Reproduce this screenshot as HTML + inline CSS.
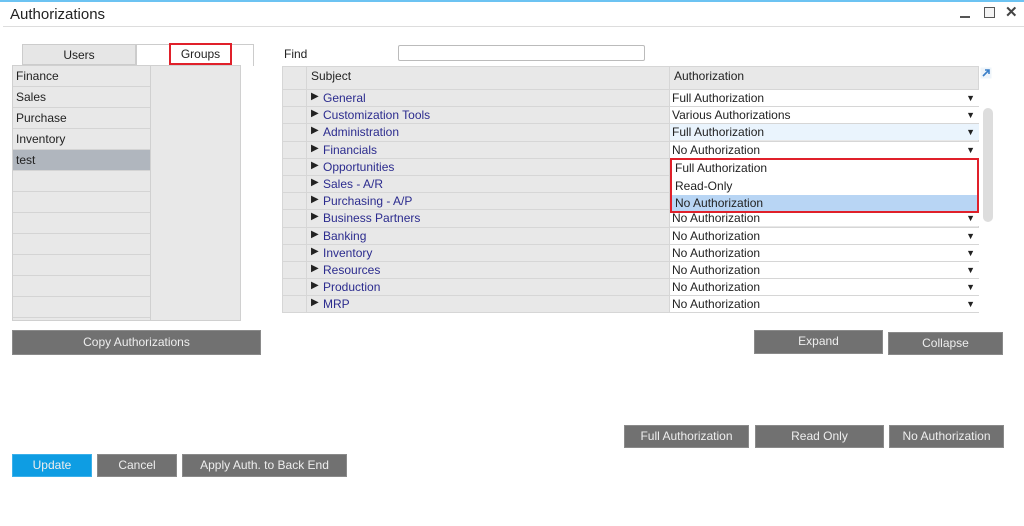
<!DOCTYPE html>
<html><head><style>
*{margin:0;padding:0;box-sizing:border-box}
body{width:1024px;height:526px;background:#fff;font-family:"Liberation Sans",sans-serif;font-size:12px;color:#222;position:relative;overflow:hidden}
.a{position:absolute}
.btn{position:absolute;background:#717171;color:#eee;text-align:center;font-size:12px;border:1px solid #8a8a8a}
.row{position:absolute;left:0;height:17px;border-bottom:1px solid #d6d6d6}
</style></head><body>
<div class="a" style="left:0;top:0;width:1024px;height:2px;background:#6cc3f2"></div>
<div class="a" style="left:10px;top:6px;font-size:15px;color:#222">Authorizations</div>
<div class="a" style="left:3px;top:26px;width:1021px;height:1px;background:#ddd"></div>
<div class="a" style="left:960px;top:16px;width:10px;height:2px;background:#555"></div>
<div class="a" style="left:984px;top:7px;width:11px;height:11px;border:1px solid #555;background:#f4f4f4"></div>
<div class="a" style="left:1005px;top:3px;font-size:15px;font-weight:bold;color:#444">✕</div>

<!-- tabs -->
<div class="a" style="left:22px;top:44px;width:114px;height:21px;background:#e6e6e6;border:1px solid #ccc;text-align:center;line-height:20px">Users</div>
<div class="a" style="left:136px;top:44px;width:118px;height:22px;background:#fff;border:1px solid #ccc;border-bottom:none"></div>
<div class="a" style="left:169px;top:43px;width:63px;height:22px;border:2px solid #e0202a;text-align:center;line-height:18px">Groups</div>

<!-- left list -->
<div class="a" style="left:12px;top:65px;width:229px;height:256px;background:#e8e8e8;border:1px solid #d0d0d0"></div>
<div class="a" style="left:150px;top:65px;width:1px;height:256px;background:#d0d0d0"></div>
<div class="a" style="left:13px;top:66px;width:137px">
<div style="height:21px;border-bottom:1px solid #d4d4d4;padding-left:3px;line-height:21px">Finance</div>
<div style="height:21px;border-bottom:1px solid #d4d4d4;padding-left:3px;line-height:21px">Sales</div>
<div style="height:21px;border-bottom:1px solid #d4d4d4;padding-left:3px;line-height:21px">Purchase</div>
<div style="height:21px;border-bottom:1px solid #d4d4d4;padding-left:3px;line-height:21px">Inventory</div>
<div style="height:21px;border-bottom:1px solid #d4d4d4;padding-left:3px;line-height:21px;background:#b0b6be">test</div>
<div style="height:21px;border-bottom:1px solid #d4d4d4"></div>
<div style="height:21px;border-bottom:1px solid #d4d4d4"></div>
<div style="height:21px;border-bottom:1px solid #d4d4d4"></div>
<div style="height:21px;border-bottom:1px solid #d4d4d4"></div>
<div style="height:21px;border-bottom:1px solid #d4d4d4"></div>
<div style="height:21px;border-bottom:1px solid #d4d4d4"></div>
<div style="height:21px;border-bottom:1px solid #d4d4d4"></div>
</div>
<div class="btn" style="left:12px;top:330px;width:249px;height:25px;line-height:22px">Copy Authorizations</div>

<!-- find -->
<div class="a" style="left:284px;top:47px">Find</div>
<div class="a" style="left:398px;top:45px;width:247px;height:16px;border:1px solid #bbb;border-radius:2px"></div>

<!-- grid -->
<div class="a" style="left:282px;top:66px;width:697px;height:247px;background:#e8e8e8;border:1px solid #d6d6d6"></div>
<div class="a" style="left:306px;top:66px;width:1px;height:247px;background:#d6d6d6"></div>
<div class="a" style="left:669px;top:66px;width:1px;height:247px;background:#d6d6d6"></div>
<div class="a" style="left:311px;top:69px">Subject</div>
<div class="a" style="left:674px;top:69px">Authorization</div>
<svg class="a" style="left:980px;top:67px" width="12" height="12"><rect x="0.5" y="0.5" width="11" height="11" fill="#eef4fa"/><path d="M3 9L9 3M5 3H9V7" stroke="#3a7fc8" stroke-width="1.6" fill="none"/></svg>
<div class="a" style="left:983px;top:108px;width:10px;height:114px;background:#ddd;border-radius:5px"></div>
<div class="a" style="left:283px;top:89px;width:696px" id="g"></div>
<div class="a" style="left:283px;top:89px;width:696px">
<div style="position:relative;height:223px">
</div></div>
<div class="a" style="left:0;top:0">
<!-- rows generated inline -->
</div>
<div class="a" style="left:283px;top:89px;width:696px">
<div style="height:17.2px;border-top:1px solid #d6d6d6;position:relative"><span class="a" style="left:28px;top:1px;font-size:10px">▶</span><span class="a" style="left:40px;top:1px;color:#2b2b8e">General</span><div class="a" style="left:387px;top:0;width:309px;height:16px;background:#fff;padding-left:2px;line-height:16px">Full Authorization<span class="a" style="right:4px;top:0;font-size:9px">▼</span></div></div>
<div style="height:17.2px;border-top:1px solid #d6d6d6;position:relative"><span class="a" style="left:28px;top:1px;font-size:10px">▶</span><span class="a" style="left:40px;top:1px;color:#2b2b8e">Customization Tools</span><div class="a" style="left:387px;top:0;width:309px;height:16px;background:#fff;padding-left:2px;line-height:16px">Various Authorizations<span class="a" style="right:4px;top:0;font-size:9px">▼</span></div></div>
<div style="height:17.2px;border-top:1px solid #d6d6d6;position:relative"><span class="a" style="left:28px;top:1px;font-size:10px">▶</span><span class="a" style="left:40px;top:1px;color:#2b2b8e">Administration</span><div class="a" style="left:387px;top:0;width:309px;height:16px;background:#eaf4fd;padding-left:2px;line-height:16px">Full Authorization<span class="a" style="right:4px;top:0;font-size:9px">▼</span></div></div>
<div style="height:17.2px;border-top:1px solid #d6d6d6;position:relative"><span class="a" style="left:28px;top:1px;font-size:10px">▶</span><span class="a" style="left:40px;top:1px;color:#2b2b8e">Financials</span><div class="a" style="left:387px;top:0;width:309px;height:16px;background:#fff;padding-left:2px;line-height:16px">No Authorization<span class="a" style="right:4px;top:0;font-size:9px">▼</span></div></div>
<div style="height:17.2px;border-top:1px solid #d6d6d6;position:relative"><span class="a" style="left:28px;top:1px;font-size:10px">▶</span><span class="a" style="left:40px;top:1px;color:#2b2b8e">Opportunities</span></div>
<div style="height:17.2px;border-top:1px solid #d6d6d6;position:relative"><span class="a" style="left:28px;top:1px;font-size:10px">▶</span><span class="a" style="left:40px;top:1px;color:#2b2b8e">Sales - A/R</span></div>
<div style="height:17.2px;border-top:1px solid #d6d6d6;position:relative"><span class="a" style="left:28px;top:1px;font-size:10px">▶</span><span class="a" style="left:40px;top:1px;color:#2b2b8e">Purchasing - A/P</span></div>
<div style="height:17.2px;border-top:1px solid #d6d6d6;position:relative"><span class="a" style="left:28px;top:1px;font-size:10px">▶</span><span class="a" style="left:40px;top:1px;color:#2b2b8e">Business Partners</span><div class="a" style="left:387px;top:0;width:309px;height:16px;background:#fff;padding-left:2px;line-height:16px">No Authorization<span class="a" style="right:4px;top:0;font-size:9px">▼</span></div></div>
<div style="height:17.2px;border-top:1px solid #d6d6d6;position:relative"><span class="a" style="left:28px;top:1px;font-size:10px">▶</span><span class="a" style="left:40px;top:1px;color:#2b2b8e">Banking</span><div class="a" style="left:387px;top:0;width:309px;height:16px;background:#fff;padding-left:2px;line-height:16px">No Authorization<span class="a" style="right:4px;top:0;font-size:9px">▼</span></div></div>
<div style="height:17.2px;border-top:1px solid #d6d6d6;position:relative"><span class="a" style="left:28px;top:1px;font-size:10px">▶</span><span class="a" style="left:40px;top:1px;color:#2b2b8e">Inventory</span><div class="a" style="left:387px;top:0;width:309px;height:16px;background:#fff;padding-left:2px;line-height:16px">No Authorization<span class="a" style="right:4px;top:0;font-size:9px">▼</span></div></div>
<div style="height:17.2px;border-top:1px solid #d6d6d6;position:relative"><span class="a" style="left:28px;top:1px;font-size:10px">▶</span><span class="a" style="left:40px;top:1px;color:#2b2b8e">Resources</span><div class="a" style="left:387px;top:0;width:309px;height:16px;background:#fff;padding-left:2px;line-height:16px">No Authorization<span class="a" style="right:4px;top:0;font-size:9px">▼</span></div></div>
<div style="height:17.2px;border-top:1px solid #d6d6d6;position:relative"><span class="a" style="left:28px;top:1px;font-size:10px">▶</span><span class="a" style="left:40px;top:1px;color:#2b2b8e">Production</span><div class="a" style="left:387px;top:0;width:309px;height:16px;background:#fff;padding-left:2px;line-height:16px">No Authorization<span class="a" style="right:4px;top:0;font-size:9px">▼</span></div></div>
<div style="height:17.2px;border-top:1px solid #d6d6d6;position:relative"><span class="a" style="left:28px;top:1px;font-size:10px">▶</span><span class="a" style="left:40px;top:1px;color:#2b2b8e">MRP</span><div class="a" style="left:387px;top:0;width:309px;height:16px;background:#fff;padding-left:2px;line-height:16px">No Authorization<span class="a" style="right:4px;top:0;font-size:9px">▼</span></div></div>
</div>

<!-- dropdown -->
<div class="a" style="left:670px;top:158px;width:309px;height:55px;background:#fff;border:2px solid #e0202a">
<div style="height:17px;padding-left:3px;line-height:17px">Full Authorization</div>
<div style="height:18px;padding-left:3px;line-height:18px">Read-Only</div>
<div style="height:16px;padding-left:3px;line-height:17px;background:#b8d5f4">No Authorization</div>
</div>

<div class="btn" style="left:754px;top:330px;width:129px;height:24px;line-height:21px">Expand</div>
<div class="btn" style="left:888px;top:332px;width:115px;height:23px;line-height:21px">Collapse</div>
<div class="btn" style="left:624px;top:425px;width:125px;height:23px;line-height:21px">Full Authorization</div>
<div class="btn" style="left:755px;top:425px;width:129px;height:23px;line-height:21px">Read Only</div>
<div class="btn" style="left:889px;top:425px;width:115px;height:23px;line-height:21px">No Authorization</div>
<div class="btn" style="left:12px;top:454px;width:80px;height:23px;line-height:21px;background:#0e9de3;border-color:#3bb0ea">Update</div>
<div class="btn" style="left:97px;top:454px;width:80px;height:23px;line-height:21px">Cancel</div>
<div class="btn" style="left:182px;top:454px;width:165px;height:23px;line-height:21px">Apply Auth. to Back End</div>
</body></html>
